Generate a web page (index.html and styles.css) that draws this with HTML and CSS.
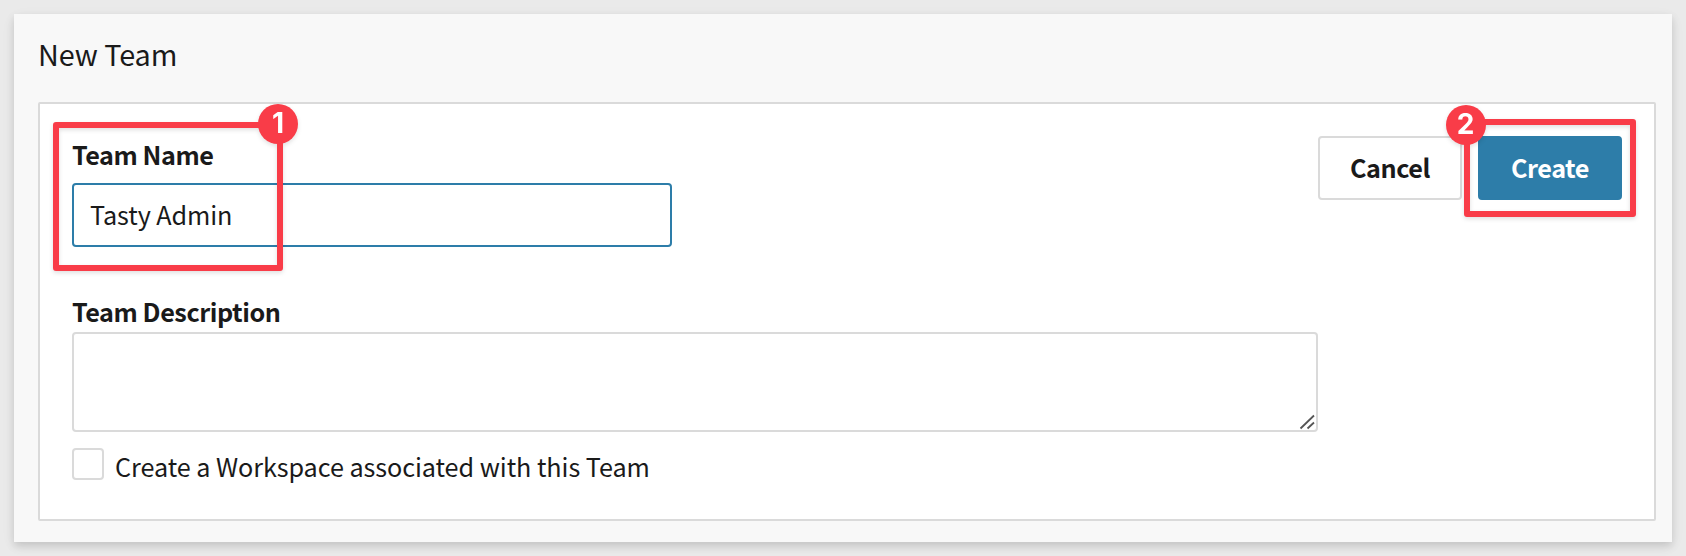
FILE: index.html
```html
<!DOCTYPE html>
<html lang="en">
<head>
<meta charset="utf-8">
<title>New Team</title>
<link rel="stylesheet" href="styles.css">
</head>
<body>
<main class="panel">
  <h1 class="title">New Team</h1>
  <form class="card">
    <div class="top-row">
      <div class="name-field">
        <label class="label" for="team-name">Team Name</label>
        <input class="text-input" id="team-name" type="text" value="Tasty Admin">
        <div class="callout callout-name"><span class="badge">1</span></div>
      </div>
      <div class="actions">
        <button class="button" type="button">Cancel</button>
        <div class="create-wrap">
          <button class="button primary" type="button">Create</button>
          <div class="callout callout-create"><span class="badge">2</span></div>
        </div>
      </div>
    </div>
    <div class="description-field">
      <label class="label" for="team-description">Team Description</label>
      <div class="textarea-wrap">
        <textarea class="textarea" id="team-description"></textarea>
        <svg class="grip" width="16" height="16" viewBox="0 0 16 16" fill="none" stroke="#555" stroke-width="1.8"><path d="M1.5 14.5 15 1.5M8.5 14.5 15 8.5"/></svg>
      </div>
    </div>
    <label class="check-row"><input class="checkbox" type="checkbox"><span class="check-text">Create a Workspace associated with this Team</span></label>
  </form>
</main>
</body>
</html>
```
FILE: styles.css
```css
* { box-sizing: border-box; }

body {
  margin: 0;
  height: 556px;
  padding: 14px;
  overflow: hidden;
  background: #eaeaea;
  color: #1a1a1a;
  font-family: "Noto Sans CJK SC", "Noto Sans", sans-serif;
  font-size: 25.2px;
}

.panel {
  height: 528px;
  padding: 20px 16px 21px 24px;
  background: #f8f8f8;
  box-shadow: 0 4px 8px rgba(0, 0, 0, 0.14), 0 4px 16px rgba(0, 0, 0, 0.04);
}

.title {
  margin: 0 0 28px;
  font-size: 28.8px;
  font-weight: 400;
  line-height: 40px;
  letter-spacing: -0.08px;
}

.card {
  height: 419px;
  padding: 32px;
  border: 2px solid #dadada;
  border-radius: 2px;
  background: #fff;
}

.top-row {
  display: flex;
  justify-content: space-between;
  align-items: flex-start;
}

.name-field {
  position: relative;
  width: 600px;
  padding-top: 2px;
}

.label {
  display: block;
  font-weight: 600;
  line-height: 32px;
  letter-spacing: -0.44px;
}

.text-input {
  display: block;
  width: 100%;
  height: 64px;
  margin-top: 13px;
  padding: 0 16px 2px;
  border: 2px solid #2d7da9;
  border-radius: 4px;
  background: #fff;
  color: inherit;
  font: inherit;
  letter-spacing: -0.08px;
  outline: none;
}

.actions { display: flex; gap: 16px; }

.create-wrap { position: relative; }

.button {
  display: block;
  width: 144px;
  height: 64px;
  padding: 0 0 3px;
  border: 2px solid #dadada;
  border-radius: 4px;
  background: #fff;
  color: inherit;
  font: inherit;
  font-weight: 600;
  letter-spacing: -0.45px;
}

.primary {
  border-color: #2d7da9;
  background: #2d7da9;
  color: #fff;
}

.description-field { width: 1246px; margin-top: 48px; }

.textarea-wrap { position: relative; margin-top: 5px; }

.textarea {
  display: block;
  width: 100%;
  height: 100px;
  padding: 12px 17px;
  border: 2px solid #dadada;
  border-radius: 4px;
  background: #fff;
  font: inherit;
  resize: none;
}

.grip { position: absolute; right: 3px; bottom: 2px; }

.check-row {
  display: flex;
  align-items: flex-start;
  gap: 11px;
  margin-top: 16px;
}

.checkbox {
  appearance: none;
  flex: none;
  width: 32px;
  height: 32px;
  margin: 0;
  border: 2px solid #dadada;
  border-radius: 4px;
  background: #fff;
}

.check-text { padding-top: 2px; line-height: 32px; letter-spacing: -0.06px; }

.callout {
  position: absolute;
  border: 6px solid #f93c48;
  border-radius: 3px;
  filter: drop-shadow(0 2px 2px rgba(0, 0, 0, 0.12));
  pointer-events: none;
}

.callout-name { left: -19px; top: -14px; width: 230px; height: 149px; }

.callout-create { left: -14px; top: -17px; width: 172px; height: 98px; }

.badge {
  position: absolute;
  display: flex;
  align-items: center;
  justify-content: center;
  width: 40px;
  height: 40px;
  padding-bottom: 2px;
  border-radius: 50%;
  background: #f93c48;
  color: #fff;
  font: 700 28px/38px Inter, sans-serif;
}

.callout-name .badge { right: -21px; top: -24px; }

.callout-create .badge { left: -24.5px; top: -20px; }
```
